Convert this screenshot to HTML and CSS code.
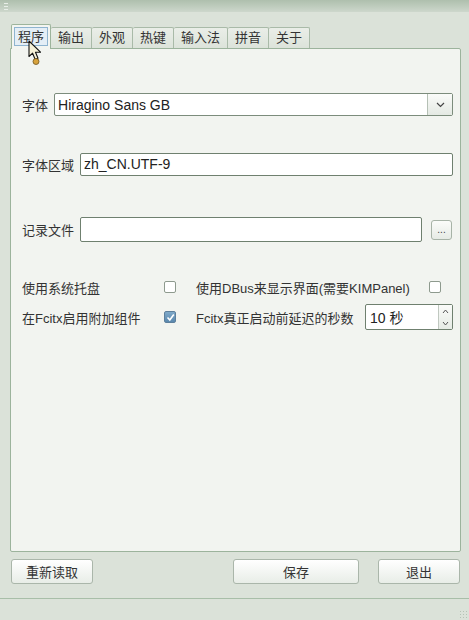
FILE: index.html
```html
<!DOCTYPE html>
<html lang="zh">
<head>
    <meta charset="UTF-8">
    <title>Fcitx 设置</title>
    <link rel="stylesheet" href="styles.css">
</head>
<body>
    <div class="titlebar"><span class="grip"></span></div>

    <div class="window">
        <div class="tabs">
            <div class="tab active"><span class="focus">程序</span></div>
            <div class="tab">输出</div>
            <div class="tab">外观</div>
            <div class="tab">热键</div>
            <div class="tab">输入法</div>
            <div class="tab">拼音</div>
            <div class="tab">关于</div>
        </div>

        <div class="panel">
            <div class="row row-font">
                <label>字体</label>
                <div class="combo">
                    <span class="combo-text">Hiragino Sans GB</span>
                    <span class="combo-btn">
                        <svg width="9" height="6" viewBox="0 0 9 6"><path d="M1 1 L4.5 4.5 L8 1" fill="none" stroke="#444" stroke-width="1.2"/></svg>
                    </span>
                </div>
            </div>

            <div class="row row-locale">
                <label>字体区域</label>
                <div class="input">zh_CN.UTF-9</div>
            </div>

            <div class="row row-log">
                <label>记录文件</label>
                <div class="input tall"></div>
                <button class="small-btn">...</button>
            </div>

            <div class="checks">
                <div class="check-row">
                    <span class="check-label">使用系统托盘</span>
                    <span class="box"></span>
                    <span class="check-label wide">使用DBus来显示界面(需要KIMPanel)</span>
                    <span class="box"></span>
                </div>
                <div class="check-row">
                    <span class="check-label">在Fcitx启用附加组件</span>
                    <span class="box checked">
                        <svg width="9" height="9" viewBox="0 0 9 9"><path d="M1.5 4.5 L3.8 7 L7.8 1.5" fill="none" stroke="#fff" stroke-width="1.6"/></svg>
                    </span>
                    <span class="check-label delay">Fcitx真正启动前延迟的秒数</span>
                    <div class="spin">
                        <span class="spin-text">10 秒</span>
                        <span class="spin-btns">
                            <svg width="7" height="5" viewBox="0 0 7 5"><path d="M1 4 L3.5 1 L6 4" fill="none" stroke="#555" stroke-width="1"/></svg>
                            <svg width="7" height="5" viewBox="0 0 7 5"><path d="M1 1 L3.5 4 L6 1" fill="none" stroke="#555" stroke-width="1"/></svg>
                        </span>
                    </div>
                </div>
            </div>
        </div>

        <div class="buttons">
            <button class="btn btn-reload">重新读取</button>
            <span class="spacer"></span>
            <button class="btn btn-save">保存</button>
            <button class="btn btn-quit">退出</button>
        </div>
    </div>

    <div class="statusbar"><span class="resize"></span></div>

    <svg class="cursor" width="18" height="26" viewBox="0 0 18 26">
        <path d="M1 1 L1 16.5 L4.6 13.2 L7.2 19.5 L10 18.3 L7.5 12.2 L12.5 12.2 Z" fill="#f6f1d8" stroke="#111" stroke-width="1.1" stroke-linejoin="round"/>
        <circle cx="8" cy="21.5" r="3" fill="#d7a23c" stroke="#6f5420" stroke-width="0.8"/>
    </svg>
</body>
</html>
```

FILE: styles.css
```css
body {
    margin: 0;
    width: 469px;
    height: 620px;
    background-color: #dbe2d9;
    font-family: "Liberation Sans", "Noto Sans CJK SC", sans-serif;
    font-size: 13px;
    color: #333;
    position: relative;
    overflow: hidden;
}

.titlebar {
    height: 12px;
    background: linear-gradient(#aebfad, #cdd7cc);
    position: relative;
}

.grip {
    position: absolute;
    left: 4px;
    top: 3px;
    width: 4px;
    height: 7px;
    background: repeating-linear-gradient(#e8eee7 0 1px, transparent 1px 3px);
}

.window {
    padding: 11px 8px 0 10px;
    display: flex;
    flex-direction: column;
}

/* tabs */
.tabs {
    display: flex;
    align-items: flex-end;
    height: 25px;
    padding-left: 1px;
    position: relative;
    z-index: 1;
}

.tab {
    height: 20px;
    line-height: 20px;
    padding: 0 7px;
    background: linear-gradient(#eaeee8, #dce3da);
    border: 1px solid #a9baa8;
    border-bottom: none;
    border-left: none;
    border-radius: 2px 2px 0 0;
    color: #333;
}

.tab.active {
    height: 24px;
    padding: 0 2px;
    background: #f3f5f1;
    border: 1px solid #9db49c;
    border-bottom: none;
    margin-bottom: -1px;
    display: flex;
    align-items: center;
}

.tab.active .focus {
    display: block;
    height: 17px;
    line-height: 17px;
    padding: 0 3px;
    border: 1px solid #8fb4d0;
    background: #e4eef6;
    margin-top: -2px;
}

.panel {
    height: 502px;
    background: #f2f4f0;
    border: 1px solid #9cb39c;
    border-radius: 0 2px 2px 2px;
    padding: 0 7px 0 11px;
    display: flex;
    flex-direction: column;
}

.row {
    display: flex;
    align-items: center;
}

.row label {
    white-space: nowrap;
}

.row-font {
    margin-top: 44px;
}

.row-locale {
    margin-top: 37px;
}

.row-log {
    margin-top: 41px;
}

.combo {
    flex: 1;
    margin-left: 6px;
    height: 21px;
    border: 1px solid #7c8c7c;
    border-radius: 2px;
    background: #fff;
    display: flex;
    align-items: center;
}

.combo-text {
    flex: 1;
    padding-left: 3px;
    font-size: 14px;
    color: #222;
}

.combo-btn {
    width: 24px;
    height: 21px;
    border-left: 1px solid #b5c0b5;
    background: linear-gradient(#fafbf9, #e4e9e3);
    display: flex;
    align-items: center;
    justify-content: center;
}

.input {
    flex: 1;
    margin-left: 6px;
    height: 21px;
    line-height: 21px;
    border: 1px solid #6f806f;
    border-radius: 2px;
    background: #fff;
    padding-left: 3px;
    font-size: 14px;
    color: #222;
}

.input.tall {
    height: 23px;
    flex: none;
    width: 337px;
}

.small-btn {
    margin-left: 9px;
    width: 21px;
    height: 20px;
    padding: 0;
    border: 1px solid #a7b3a7;
    border-radius: 3px;
    background: linear-gradient(#fbfcfa, #e6ebe5);
    font-family: inherit;
    font-size: 10px;
    color: #444;
    line-height: 12px;
}

/* checkboxes */
.checks {
    margin-top: 34px;
    display: flex;
    flex-direction: column;
    gap: 8px;
}

.check-row {
    display: flex;
    align-items: center;
    height: 22px;
}

.check-label {
    width: 142px;
    white-space: nowrap;
}

.check-label.wide {
    width: 233px;
    margin-left: 20px;
}

.check-label.delay {
    width: 169px;
    margin-left: 20px;
}

.box {
    width: 10px;
    height: 10px;
    border: 1px solid #8e9a8e;
    border-radius: 2px;
    background: #fff;
    display: flex;
    align-items: center;
    justify-content: center;
}

.box.checked {
    background: linear-gradient(#7fa9c9, #5a88ae);
    border-color: #5d7f9c;
}

.spin {
    width: 86px;
    height: 24px;
    border: 1px solid #6f806f;
    border-radius: 2px;
    background: #fff;
    display: flex;
    align-items: center;
}

.spin-text {
    flex: 1;
    padding-left: 4px;
    font-size: 14px;
    color: #222;
}

.spin-btns {
    width: 13px;
    height: 24px;
    border-left: 1px solid #c0c8c0;
    background: linear-gradient(#fafbf9, #e6ebe5);
    display: flex;
    flex-direction: column;
    align-items: center;
    justify-content: space-around;
}

/* bottom buttons */
.buttons {
    display: flex;
    margin-top: 7px;
    padding-left: 1px;
}

.btn {
    height: 25px;
    border: 1px solid #aab6aa;
    border-radius: 3px;
    background: linear-gradient(#ffffff, #e8ede7);
    font-family: inherit;
    font-size: 13px;
    color: #333;
    padding: 0;
}

.btn-reload {
    width: 82px;
}

.spacer {
    flex: 1;
}

.btn-save {
    width: 126px;
}

.btn-quit {
    width: 82px;
    margin-left: 19px;
    margin-right: 1px;
}

.statusbar {
    position: absolute;
    left: 0;
    right: 0;
    bottom: 0;
    height: 21px;
    border-top: 1px solid #a8bea8;
    background: #dbe2d9;
}

.resize {
    position: absolute;
    right: 1px;
    bottom: 1px;
    width: 9px;
    height: 9px;
    background: radial-gradient(circle, #b5c3b5 0.8px, transparent 1px) 0 0 / 3px 3px;
}

.cursor {
    position: absolute;
    left: 28px;
    top: 40px;
    z-index: 5;
}
```
